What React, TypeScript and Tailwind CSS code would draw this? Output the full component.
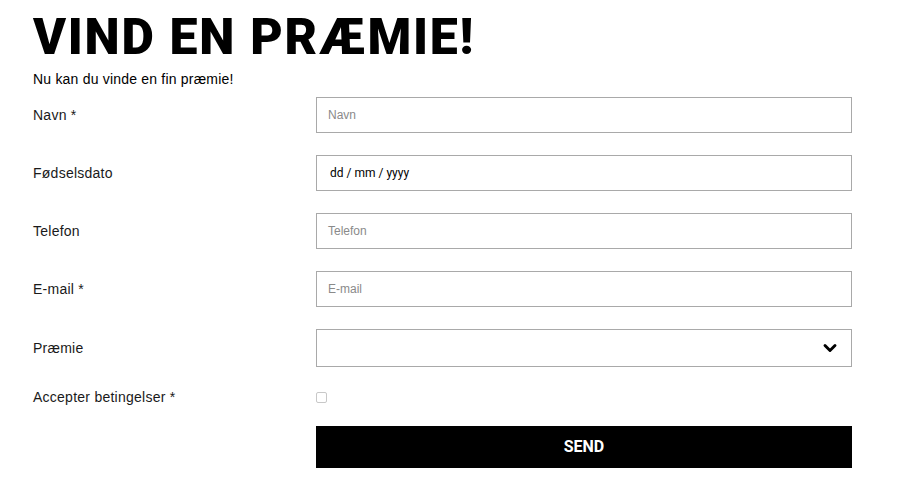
import { ChevronDown } from "lucide-react";

type Field = {
  label: string;
  placeholder?: string;
  kind: "text" | "date" | "select" | "checkbox";
};

const fields: Field[] = [
  { label: "Navn *", placeholder: "Navn", kind: "text" },
  { label: "Fødselsdato", kind: "date" },
  { label: "Telefon", placeholder: "Telefon", kind: "text" },
  { label: "E-mail *", placeholder: "E-mail", kind: "text" },
  { label: "Præmie", kind: "select" },
  { label: "Accepter betingelser *", kind: "checkbox" },
];

function FieldControl({ field }: { field: Field }) {
  if (field.kind === "select") {
    return (
      <div className="flex h-[38px] items-center justify-end border border-[#a9a9a9] pr-[11px]">
        <ChevronDown size={20} strokeWidth={3.5} className="text-black" />
      </div>
    );
  }
  if (field.kind === "checkbox") {
    return <div className="h-[11px] w-[11px] rounded-[2px] border border-[#c8c8c8]" />;
  }
  if (field.kind === "date") {
    return (
      <div className="flex h-[36px] items-center border border-[#a9a9a9] px-[13px] font-['Roboto',sans-serif] text-[12px] text-black">
        dd / mm / yyyy
      </div>
    );
  }
  return (
    <div className="flex h-[36px] items-center border border-[#a9a9a9] px-[11px] text-[12px] text-[#8a8a8a]">
      {field.placeholder}
    </div>
  );
}

export default function App() {
  return (
    <div className="min-h-[500px] bg-white px-[33px] pt-[12px] font-['Liberation_Sans',Arial,sans-serif] text-[#1a1a1a]">
      <h1 className="font-['Roboto',sans-serif] text-[50px] font-black leading-[50px] tracking-[1.7px] text-black">
        VIND EN PRÆMIE!
      </h1>
      <p className="mt-[9px] text-[14px] leading-4 tracking-[0.2px] text-black">
        Nu kan du vinde en fin præmie!
      </p>

      <div className="mt-[10px] flex flex-col gap-[22px]">
        {fields.map((field) => (
          <div key={field.label} className="flex items-center">
            <label className="w-[283px] shrink-0 text-[14px] leading-4 tracking-[0.25px]">{field.label}</label>
            <div className="w-[536px]">
              <FieldControl field={field} />
            </div>
          </div>
        ))}
        <div className="-mt-px flex">
          <div className="w-[283px] shrink-0" />
          <button
            type="button"
            className="h-[42px] w-[536px] bg-black font-['Roboto',sans-serif] text-[16px] font-bold text-white"
          >
            SEND
          </button>
        </div>
      </div>
    </div>
  );
}
